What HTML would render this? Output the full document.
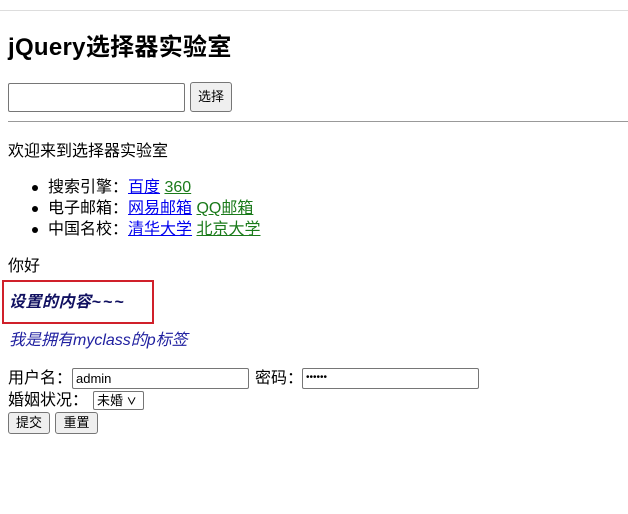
<!DOCTYPE html>
<html><head><meta charset="utf-8"><style>
body{margin:0;width:628px;height:514px;background:#fff;font-family:"Liberation Sans","Noto Sans CJK SC",sans-serif;font-size:16px;color:#000;position:relative;overflow:hidden}
.a{position:absolute;white-space:nowrap;line-height:20px}
a{text-decoration:underline}
.b{color:#0000ee}.g{color:#1a7a1a}
.in{position:absolute;border:1px solid #767676;border-radius:2px;background:#fff;box-sizing:border-box}
.bt{position:absolute;border:1px solid #767676;border-radius:3px;background:#efefef;box-sizing:border-box;font-size:13px;text-align:center}
.dot{position:absolute;left:32px;width:6px;height:6px;border-radius:50%;background:#000}
</style></head><body>
<div style="position:absolute;left:0;top:10px;width:628px;height:1px;background:#ddd"></div>
<div class="a" style="left:8px;top:34px;font-size:24px;font-weight:bold;line-height:28px;letter-spacing:0.3px">jQuery选择器实验室</div>
<div class="in" style="left:8px;top:83px;width:177px;height:29px"></div>
<div class="bt" style="left:190px;top:82px;width:42px;height:30px;line-height:28px">选择</div>
<div style="position:absolute;left:8px;top:121px;width:620px;height:1px;background:#999"></div>
<div class="a" style="left:8px;top:142px">欢迎来到选择器实验室</div>
<div class="dot" style="top:185px"></div><div class="dot" style="top:206px"></div><div class="dot" style="top:227px"></div>
<div class="a" style="left:48px;top:178px">搜索引擎：<a class="b">百度</a> <a class="g">360</a></div>
<div class="a" style="left:48px;top:199px">电子邮箱：<a class="b">网易邮箱</a> <a class="g">QQ邮箱</a></div>
<div class="a" style="left:48px;top:220px">中国名校：<a class="b">清华大学</a> <a class="g">北京大学</a></div>
<div class="a" style="left:8px;top:257px">你好</div>
<div style="position:absolute;left:2px;top:280px;width:148px;height:40px;border:2px solid #d0202a"></div>
<div class="a" style="left:9px;top:293px;font-style:italic;font-weight:bold;color:#101060;letter-spacing:0.5px">设置的内容<span style="letter-spacing:2px">~~~</span></div>
<div class="a" style="left:9px;top:331px;font-style:italic;color:#2020a0">我是拥有myclass的p标签</div>
<div class="a" style="left:8px;top:369px">用户名：</div>
<div class="in" style="left:72px;top:368px;width:177px;height:21px;font-size:13px;padding-left:3px;line-height:19px">admin</div>
<div class="a" style="left:255px;top:369px">密码：</div>
<div class="in" style="left:302px;top:368px;width:177px;height:21px;font-size:10px;padding-left:3px;line-height:18px">••••••</div>
<div class="a" style="left:8px;top:391px">婚姻状况：</div>
<div class="in" style="left:93px;top:391px;width:51px;height:19px;font-size:13px;padding-left:3px;line-height:17px">未婚 <span style="font-size:10px;font-weight:bold">&#x2228;</span></div>
<div class="bt" style="left:8px;top:412px;width:42px;height:22px;line-height:20px">提交</div>
<div class="bt" style="left:55px;top:412px;width:43px;height:22px;line-height:20px">重置</div>
</body></html>
